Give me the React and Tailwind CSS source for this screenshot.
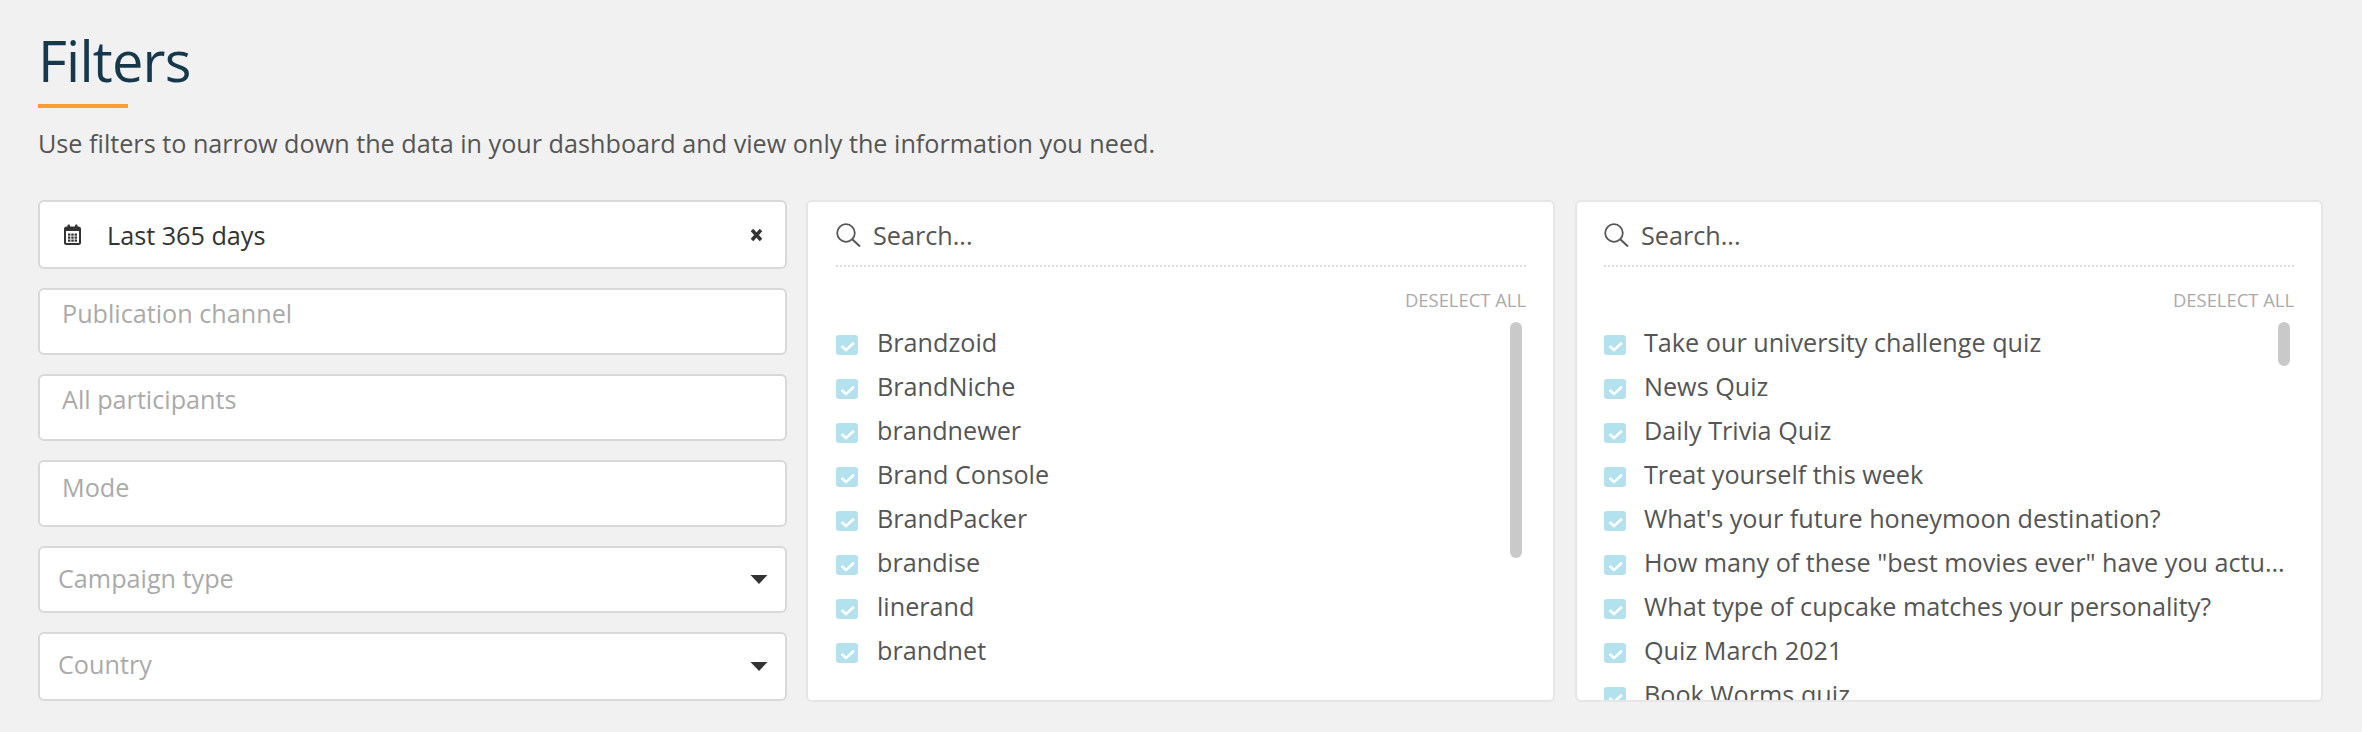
const FONT = "font-['Open_Sans',sans-serif]";

function Calendar() {
  return (
    <svg width="17" height="21" viewBox="0 0 17 21" className="shrink-0">
      <rect x="1" y="3.5" width="15" height="16.5" rx="1.5" fill="none" stroke="#333" strokeWidth="2" />
      <rect x="1" y="3" width="15" height="4" fill="#333" />
      <rect x="3.5" y="0.5" width="2.5" height="4" rx="1" fill="#333" />
      <rect x="11" y="0.5" width="2.5" height="4" rx="1" fill="#333" />
      <g fill="#333">
        <rect x="4" y="9.5" width="2.4" height="2.2" />
        <rect x="7.3" y="9.5" width="2.4" height="2.2" />
        <rect x="10.6" y="9.5" width="2.4" height="2.2" />
        <rect x="4" y="12.5" width="2.4" height="2.2" />
        <rect x="7.3" y="12.5" width="2.4" height="2.2" />
        <rect x="10.6" y="12.5" width="2.4" height="2.2" />
        <rect x="4" y="15.5" width="2.4" height="2.2" />
        <rect x="7.3" y="15.5" width="2.4" height="2.2" />
        <rect x="10.6" y="15.5" width="2.4" height="2.2" />
      </g>
    </svg>
  );
}

function Cross() {
  return (
    <svg width="13" height="14" viewBox="0 0 13 14" className="shrink-0">
      <path d="M2 2 L11 12 M11 2 L2 12" stroke="#333" strokeWidth="3.4" fill="none" />
    </svg>
  );
}

function Caret() {
  return (
    <svg width="18" height="9" viewBox="0 0 18 9" className="shrink-0">
      <path d="M0.5 0 H17.5 L9 9 Z" fill="#333" />
    </svg>
  );
}

function SearchIcon() {
  return (
    <svg width="25" height="24" viewBox="0 0 25 24" className="shrink-0">
      <circle cx="10" cy="10" r="8.8" fill="none" stroke="#555" strokeWidth="1.8" />
      <path d="M16.5 16.5 L24 23.5" stroke="#555" strokeWidth="2" fill="none" />
    </svg>
  );
}

function Box() {
  return (
    <span className="mt-[14px] block h-[20px] w-[22px] shrink-0 rounded-[3px] bg-[#b3e1ee]">
      <svg width="22" height="20" viewBox="0 0 22 20" className="block">
        <path d="M5.5 11 L10 15 L18 7.8" stroke="#fff" strokeWidth="2.6" fill="none" />
      </svg>
    </span>
  );
}

function TextCard({ label, top }) {
  return (
    <div className={`h-[67px] rounded-[6px] border-2 border-[#d8d8d8] bg-white pl-[22px] text-[25.2px] leading-[34px] text-[#aaa] ${top}`}>
      {label}
    </div>
  );
}

function SelectCard({ label, tall }) {
  return (
    <div className={`flex ${tall ? "h-[69px]" : "h-[67px]"} items-center justify-between rounded-[6px] border-2 border-[#d8d8d8] bg-white pl-[18px] pr-[17px] text-[25.2px] leading-[34px] text-[#aaa]`}>
      <span className={tall ? "mb-[5px]" : "mb-[3px]"}>{label}</span>
      <Caret />
    </div>
  );
}

function Panel({ items, thumb, padLeft, textLeft, width }) {
  return (
    <div className={`relative flex h-[502px] flex-col overflow-hidden rounded-[6px] border-2 border-[#e6e6e6] bg-white pr-[27px] ${padLeft} ${width}`}>
      <div className="flex h-[65px] shrink-0 items-center gap-[12px] border-b-2 border-dotted border-[#dddddd] pt-[3px] text-[25.2px] leading-[34px] text-[#555]">
        <SearchIcon />
        <span>Search...</span>
      </div>
      <div className="mt-[21px] shrink-0 text-right text-[18.4px] leading-[24px] text-[#aaa]">DESELECT ALL</div>
      <ul className="mt-[9px] flex flex-col">
        {items.map((t) => (
          <li key={t} className="flex h-[44px] shrink-0 items-start text-[25.2px] leading-[34px] text-[#555]">
            <Box />
            <span className={`mt-[4px] truncate ${textLeft}`}>{t}</span>
          </li>
        ))}
      </ul>
      <div className={`absolute right-[31px] top-[120px] w-[12px] rounded-[6px] bg-[#c9c9c9] ${thumb}`} />
    </div>
  );
}

export default function App() {
  const brands = ["Brandzoid", "BrandNiche", "brandnewer", "Brand Console", "BrandPacker", "brandise", "linerand", "brandnet"];
  const quizzes = [
    "Take our university challenge quiz",
    "News Quiz",
    "Daily Trivia Quiz",
    "Treat yourself this week",
    "What's your future honeymoon destination?",
    'How many of these "best movies ever" have you actually seen?',
    "What type of cupcake matches your personality?",
    "Quiz March 2021",
    "Book Worms quiz",
  ];
  return (
    <div className={`${FONT} min-h-[732px] w-full bg-[#f1f1f1] pl-[38px] pt-[22px]`}>
      <h1 className="text-[56px] font-normal leading-[76px] tracking-[-0.8px] text-[#15384d]">Filters</h1>
      <div className="mt-[6px] h-[4px] w-[90px] bg-[#fb9d36]" />
      <p className="mt-[19px] text-[25.2px] leading-[32px] text-[#555]">
        Use filters to narrow down the data in your dashboard and view only the information you need.
      </p>
      <div className="mt-[41px] grid grid-cols-[749px_750px_748px] gap-x-[19px]">
        <div className="flex flex-col gap-[19px]">
          <div className="flex h-[69px] items-center justify-between rounded-[6px] border-2 border-[#d8d8d8] bg-white pl-[24px] pr-[22px] text-[25.2px] leading-[34px] text-[#333]">
            <span className="flex items-center gap-[26px]">
              <Calendar />
              <span>Last 365 days</span>
            </span>
            <Cross />
          </div>
          <TextCard label="Publication channel" top="pt-[6px]" />
          <TextCard label="All participants" top="pt-[6px]" />
          <TextCard label="Mode" top="pt-[8px]" />
          <SelectCard label="Campaign type" />
          <SelectCard label="Country" tall />
        </div>
        <Panel items={brands} thumb="h-[236px]" padLeft="pl-[28px]" textLeft="ml-[19px]" width="w-[749px]" />
        <Panel items={quizzes} thumb="h-[44px]" padLeft="pl-[27px]" textLeft="ml-[18px]" width="w-[748px]" />
      </div>
    </div>
  );
}
